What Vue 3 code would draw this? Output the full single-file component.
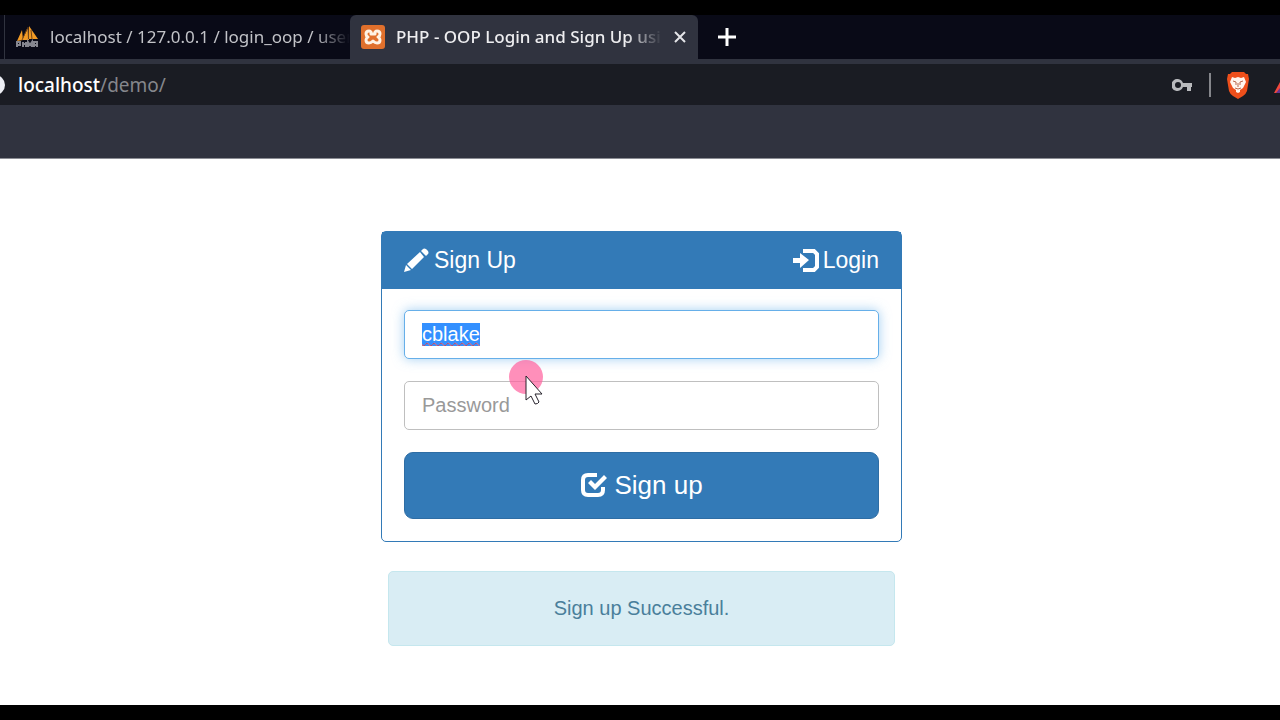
<script setup>
import { onMounted, ref } from 'vue'

const username = ref('cblake')
const password = ref('')
const address = ref('localhost/demo/')
const usernameField = ref(null)

onMounted(() => {
  usernameField.value.focus()
  usernameField.value.select()
})
</script>

<template>
  <div class="screen">
    <header class="browser">
      <nav class="tabs" aria-label="Browser tabs">
        <a class="tab" href="#phpmyadmin">
          <svg class="favicon" viewBox="0 0 24 24" aria-hidden="true">
            <path d="M2 16 7 5l1 10zM7 15 13 3l1 12zM14 14V1l9 13z" fill="#f29a24" />
            <path d="M7 15 12 4M13.500 14 13 2M16 5l1 9" stroke="#70451c" fill="none" />
            <path d="M2 22v-5h3v3H2M8 22v-5M8 19h3M11 22v-5M13 22v-5l2 3 2-3v5M19 22v-5h3v5M19 20h3" stroke="#85868f" stroke-width="2" fill="none" />
          </svg>
          <span class="tab-title">localhost / 127.0.0.1 / login_oop / user</span>
        </a>
        <div class="tab active">
          <svg class="favicon" viewBox="0 0 24 24" aria-hidden="true">
            <rect width="24" height="24" rx="3" fill="#e0702c" />
            <path d="M8 6q-3 0-3 3 0 2 2 3-2 1-2 3 0 3 3 3 2 0 4-2 2 2 4 2 3 0 3-3 0-2-2-3 2-1 2-3 0-3-3-3-1 0-2 1v2h-4V7q-1-1-2-1z" fill="none" stroke="#fff3e4" stroke-width="3" stroke-linejoin="round" />
          </svg>
          <a class="tab-title" href="#demo">PHP - OOP Login and Sign Up usi</a>
          <button class="icon-button" type="button" aria-label="Close tab">
            <svg width="12" height="12" viewBox="0 0 12 12"><path d="m1 1 10 10M11 1 1 11" stroke="#e4e5e8" stroke-width="2" /></svg>
          </button>
        </div>
        <button class="icon-button new-tab" type="button" aria-label="New tab">
          <svg width="18" height="18" viewBox="0 0 18 18"><path d="M9 0v18M0 9h18" stroke="#fff" stroke-width="3" /></svg>
        </button>
      </nav>
      <div class="address-bar">
        <svg class="site-info" width="5" height="20" viewBox="0 0 5 20" aria-hidden="true"><circle cx="-5" cy="10" r="10" fill="#eceef4" /></svg>
        <a class="address" href="#demo" :aria-label="address"><b>localhost</b>/demo/</a>
        <button class="icon-button key" type="button" aria-label="Saved passwords">
          <svg width="20" height="12" viewBox="0 0 20 12">
            <path d="M6 0a6 6 0 1 0 5 8h4v4h4V8h1V4h-9a6 6 0 0 0-5-4zm0 3a3 3 0 1 1 0 6 3 3 0 0 1 0-6z" fill="#b9babd" fill-rule="evenodd" />
          </svg>
        </button>
        <span class="divider"></span>
        <button class="icon-button shield" type="button" aria-label="Shields">
          <svg width="24" height="28" viewBox="0 0 24 28">
            <path d="M6 1h12l2 2h2l1 5-2 12q-1 3-4 5l-5 3-5-3q-3-2-4-5L1 8l1-5h2z" fill="#ee4f1b" />
            <path d="m6 6 3 1 3-1 3 1 3-1 2 5-3 6-3 2v2l-2 1-2-1v-2l-3-2-3-6z" fill="#fff5ed" />
            <path d="m7 10 3 1v3M17 10l-3 1v3M12 12v4M9 17l3 1 3-1" stroke="#b9674a" stroke-width="1" fill="none" />
          </svg>
        </button>
        <svg width="6" height="18" viewBox="0 0 6 18" aria-hidden="true">
          <path d="M0 17 6 6v11z" fill="#f0483c" /><path d="M2 17 6 12v5z" fill="#653591" />
        </svg>
      </div>
      <div class="bookmarks"></div>
    </header>

    <main class="page">
      <form class="panel" @submit.prevent>
        <div class="panel-heading">
          <a href="#signup">
            <svg width="26" height="26" viewBox="0 0 26 26" aria-hidden="true">
              <path d="m0 24 2-7 5 5zM3 16 16 4l4 5L8 21zM17 3l2-2q1-1 3 0l2 2q1 2 0 3l-2 2z" fill="#fff" />
            </svg>
            <span class="heading-text spaced">Sign Up</span>
          </a>
          <a href="#login">
            <svg width="27" height="26" viewBox="0 0 27 26" aria-hidden="true">
              <path d="M10 3h11l3 3v13l-3 3H10" fill="none" stroke="#fff" stroke-width="4" />
              <path d="M0 10h7V5l9 7-9 8v-5H0z" fill="#fff" />
            </svg>
            <span class="heading-text close">Login</span>
          </a>
        </div>
        <div class="panel-body">
          <input ref="usernameField" v-model="username" class="field username" type="text" aria-label="Username" spellcheck="false" />
          <input v-model="password" class="field" type="password" placeholder="Password" aria-label="Password" />
          <button class="submit" type="submit">
            <svg width="28" height="28" viewBox="0 0 28 28" aria-hidden="true">
              <path d="M17 3H8Q3 3 3 8v10q0 5 5 5h10q5 0 5-5v-3" fill="none" stroke="#fff" stroke-width="4" />
              <path d="m8 11 3-3 4 4 9-9 3 3-12 12z" fill="#fff" />
            </svg>
            Sign up
          </button>
        </div>
        <svg class="pointer" width="36" height="48" viewBox="0 0 36 48" aria-hidden="true">
          <circle cx="18" cy="18" r="17" fill="#ff5f9c" fill-opacity=".7" />
          <path d="M18 17v24l5-4 4 8q3 0 4-2l-4-8h7z" fill="#fff" stroke="#26222b" stroke-width="1" />
        </svg>
      </form>
      <p class="alert" role="status">Sign up Successful.</p>
    </main>
  </div>
</template>

<style>
html,
body {
  background: #000;
}
</style>

<style scoped>
* {
  box-sizing: border-box;
}

.screen {
  display: flex;
  flex-direction: column;
  min-height: 100vh;
  padding: 15px 0;
  background: #000;
  font-family: "Liberation Sans", Arial, sans-serif;
}

a {
  color: inherit;
  text-decoration: none;
}

svg {
  display: block;
  flex: none;
}

.browser {
  border-bottom: 1px solid #8b8d94;
  background: #30333f;
  font-family: "Noto Sans", "Open Sans", sans-serif;
}

.tabs {
  display: flex;
  align-items: stretch;
  height: 44px;
  background: #090a17;
}

.tab {
  display: flex;
  align-items: center;
  width: 346px;
  padding: 0 0 0 10px;
  border-left: 1px solid #30333f;
  margin-left: 4px;
  color: #c2c3c8;
  font-size: 17px;
}

.tab.active {
  width: 348px;
  padding: 0 12px 0 11px;
  border: 0;
  border-radius: 6px 6px 0 0;
  margin: 0;
  background: #30333f;
  color: #eeeef0;
  font-weight: 500;
}

.favicon {
  width: 24px;
  height: 24px;
}

.tab-title {
  flex: 1;
  min-width: 0;
  margin-left: 11px;
  line-height: 26px;
  white-space: nowrap;
  mask-image: linear-gradient(to right, #000 calc(100% - 36px), transparent);
}

.icon-button {
  display: flex;
  align-items: center;
  padding: 0;
  border: 0;
  background: none;
}

.tab .icon-button {
  margin-left: 12px;
}

.new-tab {
  margin-left: 20px;
}

.address-bar {
  display: flex;
  align-items: center;
  height: 46px;
  border-top: 5px solid #30333f;
  background: #1a1c23;
}

.address {
  flex: 1;
  margin-left: 13px;
  color: #85878c;
  font-size: 19px;
  line-height: 26px;
}

.address b {
  color: #fff;
  font-weight: 500;
}

.divider {
  width: 2px;
  height: 24px;
  margin: 0 15px 0 17px;
  background: #85868b;
}

.shield {
  margin-right: 24px;
}

.bookmarks {
  height: 53px;
}

.page {
  display: flex;
  flex: 1;
  flex-direction: column;
  align-items: center;
  padding: 72px 0 24px 3px;
  background: #fff;
}

.panel {
  position: relative;
  width: 521px;
  max-width: 100%;
  border: 1px solid #337ab7;
  border-radius: 5px;
}

.panel-heading {
  display: flex;
  align-items: center;
  justify-content: space-between;
  height: 57px;
  padding: 0 22px;
  background: #337ab7;
  color: #fff;
  font-size: 23px;
}

.panel-heading a {
  display: flex;
  align-items: center;
}

.spaced {
  margin-left: 4px;
}

.close {
  margin-left: 3px;
}

.panel-body {
  display: grid;
  gap: 22px;
  padding: 21px 22px 22px;
}

.field {
  width: 100%;
  height: 49px;
  padding: 0 17px;
  border: 1px solid #bfbfbf;
  border-radius: 5px;
  background: #fff;
  color: #555;
  font-family: inherit;
  font-size: 20px;
  outline: none;
}

.field::placeholder {
  color: #999;
}

.field:focus {
  border-color: #66afe9;
  box-shadow: 0 0 12px rgb(102 175 233 / 60%);
}

.username {
  text-decoration: underline wavy #b02a55 1px;
}

.username::selection {
  background: #3390ff;
  color: #fff;
  text-decoration: underline wavy #b02a55 1px;
}

.submit {
  display: flex;
  align-items: center;
  justify-content: center;
  gap: 6px;
  height: 67px;
  padding: 0;
  border: 1px solid #2e6da4;
  border-radius: 9px;
  background: #337ab7;
  color: #fff;
  font-family: inherit;
  font-size: 26px;
}

.alert {
  width: 507px;
  max-width: 100%;
  padding: 24px;
  border: 1px solid #c5e7ee;
  border-radius: 5px;
  margin: 29px 0 0;
  background: #d9edf4;
  color: #4a7f9b;
  font-size: 20px;
  line-height: 25px;
  text-align: center;
}

.pointer {
  position: absolute;
  top: 127px;
  left: 126px;
  pointer-events: none;
}
</style>
